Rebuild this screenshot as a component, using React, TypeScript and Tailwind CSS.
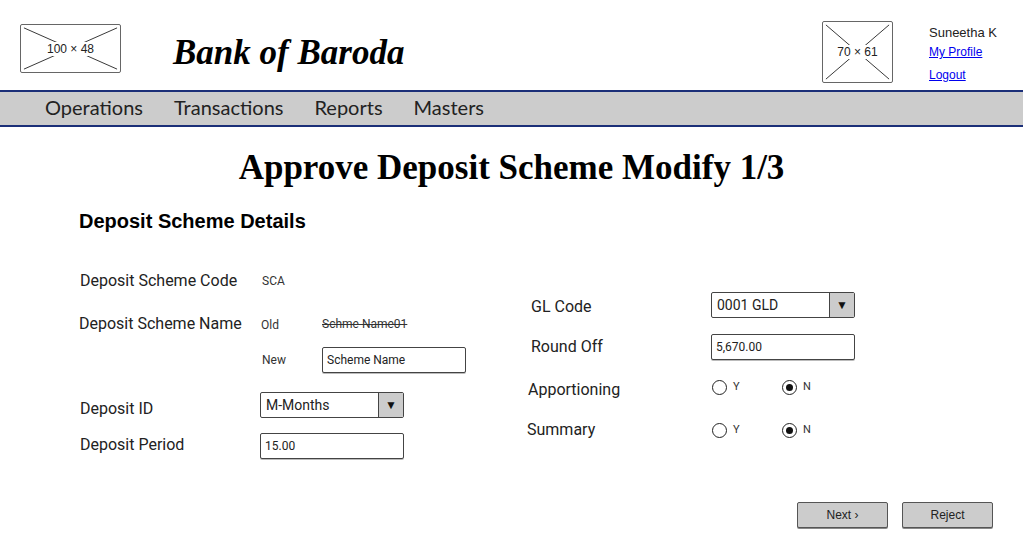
import { ReactNode } from "react";

const Placeholder = ({ w, h, label }: { w: number; h: number; label: string }) => {
  return (
    <div
      className="relative border-[1.5px] border-[#666] rounded-[2px] bg-white flex items-center justify-center"
      style={{ width: w, height: h }}
    >
      <svg className="absolute inset-0 w-full h-full" viewBox={`0 0 ${w} ${h}`} preserveAspectRatio="none">
        <line x1="3" y1="3" x2={w - 3} y2={h - 3} stroke="#333" strokeWidth="1" />
        <line x1={w - 3} y1="3" x2="3" y2={h - 3} stroke="#333" strokeWidth="1" />
      </svg>
      <span className="relative bg-white px-[2px] text-[12px] leading-[14px] text-[#222] font-['Liberation_Sans',sans-serif]">
        {label}
      </span>
    </div>
  );
};

const TextBox = ({ value, width }: { value: string; width: number }) => (
  <div
    className="h-[26px] border border-[#444] rounded-[2px] bg-white flex items-center pl-[4px] text-[12px] text-[#222] shadow-[0_1px_0_#bbb]"
    style={{ width }}
  >
    {value}
  </div>
);

const SelectBox = ({ value }: { value: string }) => (
  <div className="w-[144px] h-[26px] border border-[#444] rounded-[2px] bg-white flex items-stretch">
    <div className="flex-1 flex items-center pl-[5px] text-[14px] text-[#222]">{value}</div>
    <div className="w-[25px] bg-[#ccc] border-l border-[#444] flex items-center justify-center text-[12px] text-[#111]">
      ▼
    </div>
  </div>
);

const Radio = ({ label, checked }: { label: string; checked?: boolean }) => (
  <div className="flex items-center gap-[6px]">
    <div className="w-[15px] h-[15px] rounded-full border border-[#222] bg-white flex items-center justify-center">
      {checked && <div className="w-[7px] h-[7px] rounded-full bg-[#111]" />}
    </div>
    <span className="text-[11px] text-[#333]">{label}</span>
  </div>
);

const Row = ({ children, className }: { children: ReactNode; className: string }) => (
  <div className={"flex items-center " + className}>{children}</div>
);

const App = () => {
  return (
    <div className="w-[1023px] h-[545px] bg-white overflow-hidden font-['Roboto',sans-serif] text-[#222]">
      {/* header */}
      <header className="flex h-[90px]">
        <div className="ml-[20px] mt-[24px]">
          <Placeholder w={101} h={49} label="100 × 48" />
        </div>
        <h1 className="ml-[52px] mt-[33px] text-[35px] leading-[40px] italic font-bold text-black font-['Liberation_Serif',serif]">
          Bank of Baroda
        </h1>
        <div className="flex-1" />
        <div className="mt-[21px]">
          <Placeholder w={71} h={62} label="70 × 61" />
        </div>
        <div className="ml-[36px] mr-[20px] mt-[25px] flex flex-col w-[74px] font-['Liberation_Sans',sans-serif]">
          <span className="text-[13px] leading-[16px] text-[#222]">Suneetha K</span>
          <a href="#" className="mt-[4px] text-[12px] leading-[14px] text-[#0000ee] underline">
            My Profile
          </a>
          <a href="#" className="mt-[9px] text-[12px] leading-[14px] text-[#0000ee] underline">
            Logout
          </a>
        </div>
      </header>

      {/* menu */}
      <nav className="h-[37px] pb-[4px] bg-[#ccc] border-t-2 border-b-2 border-[#1b2f78] flex items-center pl-[45px] gap-[31px] font-['Lato',sans-serif] text-[20px] text-[#222]">
        <span>Operations</span>
        <span>Transactions</span>
        <span>Reports</span>
        <span>Masters</span>
      </nav>

      <h2 className="mt-[21px] text-center text-[35px] leading-[40px] font-bold text-black font-['Liberation_Serif',serif]">
        Approve Deposit Scheme Modify 1/3
      </h2>

      <h3 className="mt-[21px] pl-[79px] text-[20px] leading-[24px] font-bold text-black font-['Liberation_Sans',sans-serif]">
        Deposit Scheme Details
      </h3>

      {/* form */}
      <div className="flex pl-[80px]">
        <div className="w-[447px] flex flex-col text-[16px]">
          <Row className="mt-[36px] h-[24px]">
            <span className="w-[182px]">Deposit Scheme Code</span>
            <span className="text-[12px] text-[#333]">SCA</span>
          </Row>
          <Row className="mt-[19px] h-[24px]">
            <span className="w-[182px] -ml-[1px]">Deposit Scheme Name</span>
            <span className="w-[61px] text-[12px] text-[#333] mt-[2px]">Old</span>
            <span className="text-[12px] text-[#333] line-through">Schme Name01</span>
          </Row>
          <Row className="mt-[11px] h-[26px]">
            <span className="w-[182px]" />
            <span className="w-[60px] text-[12px] text-[#333]">New</span>
            <TextBox value="Scheme Name" width={144} />
          </Row>
          <Row className="mt-[19px] h-[26px]">
            <span className="w-[180px] mt-[7px]">Deposit ID</span>
            <SelectBox value="M-Months" />
          </Row>
          <Row className="mt-[15px] h-[26px]">
            <span className="w-[180px] -mt-[2px]">Deposit Period</span>
            <TextBox value="15.00" width={144} />
          </Row>
        </div>

        <div className="flex flex-col text-[16px]">
          <Row className="mt-[59px] h-[26px]">
            <span className="w-[184px] pl-[4px] mt-[3px]">GL Code</span>
            <SelectBox value="0001 GLD" />
          </Row>
          <Row className="mt-[16px] h-[26px]">
            <span className="w-[184px] pl-[4px] -mt-[1px]">Round Off</span>
            <TextBox value="5,670.00" width={144} />
          </Row>
          <Row className="mt-[17px] h-[24px]">
            <span className="w-[185px] pl-[1px] mt-[1px]">Apportioning</span>
            <div className="w-[70px] -mt-[4px]">
              <Radio label="Y" />
            </div>
            <div className="-mt-[4px]">
              <Radio label="N" checked />
            </div>
          </Row>
          <Row className="mt-[17px] h-[24px]">
            <span className="w-[185px]">Summary</span>
            <div className="w-[70px]">
              <Radio label="Y" />
            </div>
            <Radio label="N" checked />
          </Row>
        </div>
      </div>

      {/* actions */}
      <div className="mt-[43px] flex justify-end pr-[30px] gap-[14px] font-['Liberation_Sans',sans-serif]">
        <button className="w-[91px] h-[26px] bg-[#ccc] border border-[#555] rounded-[2px] text-[12px] text-[#222] shadow-[0_1px_0_#888]">
          Next ›
        </button>
        <button className="w-[91px] h-[26px] bg-[#ccc] border border-[#555] rounded-[2px] text-[12px] text-[#222] shadow-[0_1px_0_#888]">
          Reject
        </button>
      </div>
    </div>
  );
};

export default App;
